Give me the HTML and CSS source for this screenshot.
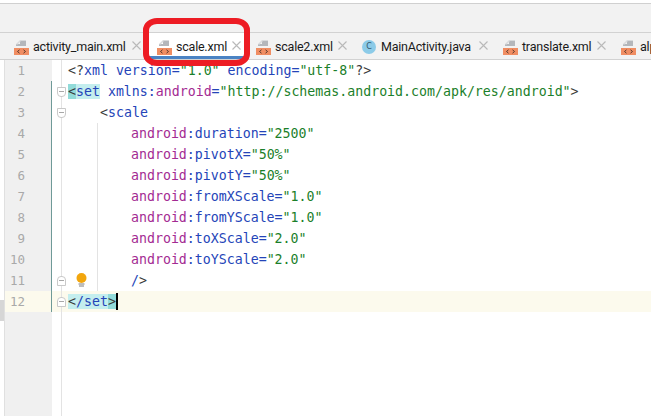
FILE: index.html
```html
<!DOCTYPE html>
<html lang="en">
<head>
<meta charset="utf-8">
<title>scale.xml</title>
<link rel="stylesheet" href="styles.css">
</head>
<body>
<svg width="0" height="0" class="defs">
  <symbol id="xml" viewBox="0 0 15 15">
    <path d="M6 0h4v2H8v2H6zM11 0h1v6H2V4h4V0h5z" fill="#b4b7bb"/>
    <path d="M2 4L6 0h6v1H7L3 5z" fill="#d8dadc"/>
    <rect x="0" y="8" width="15" height="7" fill="#f08d62"/>
    <path d="M5.500 9.800L3.500 11.500l2 1.700M9.500 9.800l2 1.700-2 1.700" fill="none" stroke="#5a3a2c" stroke-width="1"/>
  </symbol>
  <symbol id="close" viewBox="0 0 9 9">
    <path d="M.5.500l8 8M8.500.500l-8 8" fill="none" stroke="#b9b9b9" stroke-width="1.100"/>
  </symbol>
</svg>
<div class="top"></div>
<div class="toolbar"></div>
<nav class="tabs">
  <div class="tab t1"><svg class="ico"><use href="#xml"/></svg><span class="name">activity_main.xml</span><svg class="x"><use href="#close"/></svg></div>
  <div class="tab t2 active"><svg class="ico"><use href="#xml"/></svg><span class="name">scale.xml</span><svg class="x"><use href="#close"/></svg></div>
  <div class="tab t3"><svg class="ico"><use href="#xml"/></svg><span class="name">scale2.xml</span><svg class="x"><use href="#close"/></svg></div>
  <div class="tab t4"><span class="cls">C</span><span class="name">MainActivity.java</span><svg class="x"><use href="#close"/></svg></div>
  <div class="tab t5"><svg class="ico"><use href="#xml"/></svg><span class="name">translate.xml</span><svg class="x"><use href="#close"/></svg></div>
  <div class="tab t6"><svg class="ico"><use href="#xml"/></svg><span class="name">alpha.xml</span></div>
</nav>
<main class="editor">
  <div class="line"><span class="num">1</span><span class="mark"></span><code><span class="k">&lt;?</span>xml version=<span class="s">"1.0"</span> encoding=<span class="s">"utf-8"</span><span class="k">?&gt;</span></code></div>
  <div class="line"><span class="num">2</span><span class="mark bar"><i class="fold open"></i></span><code><span class="brace">&lt;</span><span class="hl">set</span> xmlns:<span class="a">android</span>=<span class="s">"http://schemas.android.com/apk/res/android"</span><span class="k">&gt;</span></code></div>
  <div class="line"><span class="num">3</span><span class="mark bar"><i class="fold open"></i></span><code class="in1"><span class="k">&lt;</span>scale</code></div>
  <div class="line"><span class="num">4</span><span class="mark bar"></span><code class="in2"><span class="a">android</span>:duration=<span class="s">"2500"</span></code></div>
  <div class="line"><span class="num">5</span><span class="mark bar"></span><code class="in2"><span class="a">android</span>:pivotX=<span class="s">"50%"</span></code></div>
  <div class="line"><span class="num">6</span><span class="mark bar"></span><code class="in2"><span class="a">android</span>:pivotY=<span class="s">"50%"</span></code></div>
  <div class="line"><span class="num">7</span><span class="mark bar"></span><code class="in2"><span class="a">android</span>:fromXScale=<span class="s">"1.0"</span></code></div>
  <div class="line"><span class="num">8</span><span class="mark bar"></span><code class="in2"><span class="a">android</span>:fromYScale=<span class="s">"1.0"</span></code></div>
  <div class="line"><span class="num">9</span><span class="mark bar"></span><code class="in2"><span class="a">android</span>:toXScale=<span class="s">"2.0"</span></code></div>
  <div class="line"><span class="num">10</span><span class="mark bar"></span><code class="in2"><span class="a">android</span>:toYScale=<span class="s">"2.0"</span></code></div>
  <div class="line"><span class="num">11</span><span class="mark bar"><i class="fold shut"></i><svg class="bulb" viewBox="0 0 11 15"><circle cx="5.500" cy="5" r="5" fill="#f2a60d"/><path d="M2.500 11h6M3 13h5" stroke="#7d7d7d" stroke-width="1"/></svg></span><code class="in2">/<span class="k">&gt;</span></code></div>
  <div class="line current"><span class="num">12</span><span class="mark bar"><i class="fold shut"></i></span><code><span class="hl"><span class="k">&lt;</span>/set</span><span class="brace">&gt;</span><b class="caret"></b></code></div>
  <div class="guide"></div>
  <div class="stripe"></div>
</main>
<div class="callout"></div>
</body>
</html>
```
FILE: styles.css
```css
html, body {
  margin: 0;
  width: 651px;
  height: 416px;
  overflow: hidden;
  background: #fff;
}
.defs { position: absolute; }
.top { height: 3px; background: #fff; border-bottom: 1px solid #d0d0d0; }
.toolbar { height: 28px; background: #f2f2f2; border-bottom: 1px solid #d2d2d2; }
.tabs {
  display: flex;
  height: 26px;
  padding-left: 5px;
  background: #f2f2f2;
  border-bottom: 1px solid #d2d2d2;
  font: 12.500px/26px Roboto, "Noto Sans", sans-serif;
  letter-spacing: -0.220px;
  color: #1a1a1a;
  overflow: hidden;
}
.tab {
  display: flex; align-items: center; flex: none; box-sizing: border-box;
  height: 26px; padding: 2px 6px 0 9px;
}
.tab.t1 { width: 142px; }
.tab.t2 { width: 100px; padding-left: 10px; }
.tab.t3 { width: 106px; }
.tab.t4 { width: 141px; }
.tab.t5 { width: 118px; }
.tab.active { background: #fff; box-shadow: inset 0 -3px 0 #4a83c4; }
.ico { width: 15px; height: 15px; margin-right: 4px; flex: none; }
.name { white-space: nowrap; flex: none; }
.x { width: 9px; height: 9px; margin-left: auto; margin-top: -3px; flex: none; }
.cls {
  width: 14px; height: 14px; margin-right: 5px; border-radius: 50%;
  background: #8ccbe8; color: #35566b;
  font: 8px/14px "DejaVu Sans", sans-serif; text-align: center; flex: none;
}
.editor {
  position: relative;
  height: 356px;
  background: linear-gradient(90deg, #fff 0 5px, #f0f0f0 5px 52px, #fff 52px);
  font: 13.250px/21px "DejaVu Sans Mono", monospace;
  color: #2444b8;
}
.line { display: flex; height: 21px; white-space: pre; }
.line.current { background: linear-gradient(90deg, #fff 0 5px, #fcfaed 5px); }
.num {
  box-sizing: border-box; width: 25px; text-align: right; flex: none;
  color: #a9a9a9; font: 12.500px/21px "DejaVu Sans Mono", monospace;
}
.mark { position: relative; width: 43px; flex: none; }
.mark.bar::before { content: ""; position: absolute; left: 26px; top: 0; bottom: 0; width: 1px; background: #6f9a98; }
.fold {
  position: absolute; left: 32px; top: 6px; box-sizing: border-box; z-index: 1;
  width: 9px; height: 10px; background: #fff; border: 1px solid #c9c9c9;
}
.fold::after { content: ""; position: absolute; left: 1px; top: 3px; width: 5px; height: 1px; background: #a8a8a8; }
.fold.open { border-radius: 0 0 4px 4px; }
.fold.shut { border-radius: 4px 4px 0 0; }
.bulb { position: absolute; left: 51px; top: 3px; width: 11px; height: 15px; z-index: 1; }
code { font: inherit; display: block; }
.in1 { padding-left: 32px; }
.in2 { padding-left: 63px; }
.k { color: #3a3a3a; }
.a { color: #a32a92; }
.s { color: #1b7f2a; }
.hl { background: #c4eeee; }
.brace { background: #92dbd9; color: #3a3a3a; }
.caret { display: inline-block; width: 2px; height: 17px; background: #000; vertical-align: -4px; }
.guide { position: absolute; left: 97px; top: 63px; height: 168px; width: 1px; background: #e3e3e3; }
.stripe { position: absolute; left: 0; top: 240px; width: 4px; height: 21px; background: #d6d6d6; }
.editor::after { content: ""; position: absolute; left: 61px; top: 0; bottom: 0; width: 1px; background: #e3e3e3; }
.editor::before { content: ""; position: absolute; left: 4px; top: 0; bottom: 0; width: 1px; background: #e0e0e0; }
.callout {
  position: absolute; left: 143px; top: 18px; width: 107px; height: 48px;
  box-sizing: border-box; border: 6px solid #ed1c24; border-radius: 14px / 12px;
}
```
